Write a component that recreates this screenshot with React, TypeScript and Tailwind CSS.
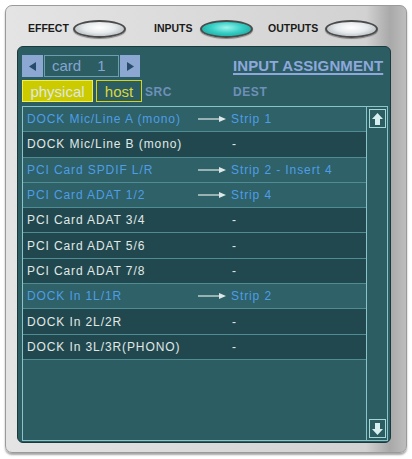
import React from 'react';

const rows = [
  { src: 'DOCK Mic/Line A (mono)', dest: 'Strip 1' },
  { src: 'DOCK Mic/Line B (mono)', dest: '' },
  { src: 'PCI Card SPDIF L/R', dest: 'Strip 2 - Insert 4' },
  { src: 'PCI Card ADAT 1/2', dest: 'Strip 4' },
  { src: 'PCI Card ADAT 3/4', dest: '' },
  { src: 'PCI Card ADAT 5/6', dest: '' },
  { src: 'PCI Card ADAT 7/8', dest: '' },
  { src: 'DOCK In 1L/1R', dest: 'Strip 2' },
  { src: 'DOCK In 2L/2R', dest: '' },
  { src: 'DOCK In 3L/3R(PHONO)', dest: '' },
];

const Oval = ({ active }: { active?: boolean }) => (
  <div
    className={`w-[53px] h-[18px] rounded-[50%] border-[2px] border-[#4a4a4a] shadow-[0_1px_1px_rgba(0,0,0,0.4)] ${
      active
        ? 'bg-[radial-gradient(ellipse_at_50%_40%,#9ff5ee_0%,#36cfc6_45%,#14948e_100%)]'
        : 'bg-[radial-gradient(ellipse_at_50%_40%,#ffffff_0%,#e6eaec_45%,#9aa2a6_100%)]'
    }`}
  />
);

const Arrow = () => (
  <svg width="29" height="8" viewBox="0 0 29 8" className="mr-[4px]">
    <line x1="0" y1="4" x2="24" y2="4" stroke="#dfe8e8" strokeWidth="1.2" />
    <polygon points="21,1 28,4 21,7" fill="#dfe8e8" />
  </svg>
);

const ScrollBtn = ({ up }: { up?: boolean }) => (
  <div className="w-[17px] h-[19px] border border-[#a6d6d6] flex items-center justify-center">
    <svg width="13" height="14" viewBox="0 0 13 14">
      {up ? (
        <polygon points="6.5,1 12,7 9,7 9,13 4,13 4,7 1,7" fill="#d6eeee" />
      ) : (
        <polygon points="6.5,13 12,7 9,7 9,1 4,1 4,7 1,7" fill="#d6eeee" />
      )}
    </svg>
  </div>
);

export default function App() {
  return (
    <div className="w-[412px] h-[459px] bg-white overflow-hidden pt-[5px] pl-[5px] font-['Liberation_Sans',Arial,sans-serif]">
      <div className="w-[402px] h-[448px] rounded-[7px] border border-[#9a9a9a] bg-[linear-gradient(to_right,#e4e4e4_0%,#dcdcdc_40%,#d2d2d2_90%,#a9a9a9_96%,#bdbdbd_100%)] shadow-[0_2px_2px_rgba(0,0,0,0.35)]">
        {/* top bar */}
        <div className="h-[40px] flex items-center pt-[5px] pl-[22px]">
          <span className="w-[45px] text-[10.5px] font-bold text-[#1a1a1a]">EFFECT</span>
          <Oval />
          <span className="ml-[28px] w-[46px] text-[10.5px] font-bold text-[#1a1a1a]">INPUTS</span>
          <Oval active />
          <span className="ml-[15px] w-[57px] text-[10.5px] font-bold text-[#1a1a1a]">OUTPUTS</span>
          <Oval />
        </div>

        {/* teal panel */}
        <div className="ml-[11px] w-[374px] h-[397px] rounded-[6px] bg-[#2c5d63] border border-[#1b3a3e] pt-[8px] pl-[4px] flex flex-col">
          <div className="flex items-center h-[22px]">
            <div className="flex items-center">
              <div className="w-[21px] h-[22px] bg-[#8ca8d2] flex items-center justify-center">
                <svg width="7" height="9" viewBox="0 0 7 9"><polygon points="7,0 0,4.5 7,9" fill="#294b6b" /></svg>
              </div>
              <div className="ml-[1px] w-[75px] h-[22px] border border-[#6b9fb0] flex items-center pl-[7px] text-[15px] text-[#86a4d0]">
                <span>card</span>
                <span className="ml-[16px]">1</span>
              </div>
              <div className="ml-[1px] w-[20px] h-[22px] bg-[#8ca8d2] flex items-center justify-center">
                <svg width="7" height="9" viewBox="0 0 7 9"><polygon points="0,0 7,4.5 0,9" fill="#294b6b" /></svg>
              </div>
            </div>
            <span className="ml-[93px] text-[15px] font-bold text-[#8ea8dc] underline decoration-[1.5px] underline-offset-[2px] tracking-[0.1px] whitespace-nowrap">
              INPUT ASSIGNMENT
            </span>
          </div>

          <div className="flex items-center mt-[3px] h-[22px]">
            <div className="w-[71px] h-[22px] bg-[#cccb00] border border-[#f0ee50] flex items-center justify-center text-[15px] text-[#dfe8e4] leading-none">
              physical
            </div>
            <div className="ml-[3px] w-[46px] h-[22px] border border-[#d4d41c] flex items-center justify-center text-[15px] text-[#d8d83a] leading-none">
              host
            </div>
            <span className="ml-[3px] mt-[2px] w-[88px] text-[12px] font-bold text-[#6e90b8] tracking-[0.6px]">SRC</span>
            <span className="mt-[2px] text-[12px] font-bold text-[#6e90b8] tracking-[0.6px]">DEST</span>
          </div>

          {/* list */}
          <div className="mt-[4px] w-[366px] h-[335px] border border-[#8ac4c8] flex">
            <div className="flex-1 flex flex-col">
              {rows.map((r, i) => (
                <div
                  key={i}
                  className={`h-[25.3px] flex items-center border-b border-[#4f8c94] pl-[4px] text-[12px] tracking-[0.9px] ${
                    r.dest ? 'bg-[#2e6168] text-[#4e9de6]' : 'bg-[#21484e] text-[#e0e8e8]'
                  }`}
                >
                  <span className="w-[171px] whitespace-nowrap">{r.src}</span>
                  {r.dest ? (
                    <span className="flex items-center whitespace-nowrap">
                      <Arrow />
                      {r.dest}
                    </span>
                  ) : (
                    <span className="ml-[34px]">-</span>
                  )}
                </div>
              ))}
            </div>
            <div className="w-[21px] border-l border-[#8ac4c8] flex flex-col items-center justify-between py-[2px]">
              <ScrollBtn up />
              <ScrollBtn />
            </div>
          </div>
        </div>
      </div>
    </div>
  );
}
